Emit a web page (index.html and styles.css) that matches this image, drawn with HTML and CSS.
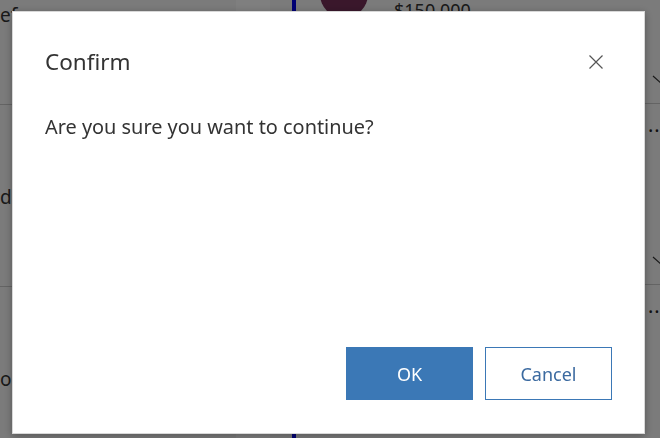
FILE: index.html
```html
<!DOCTYPE html>
<html lang="en">
<head>
  <meta charset="UTF-8" />
  <title>Opportunities</title>
  <link rel="stylesheet" href="styles.css">
</head>
<body>

<!-- page behind the dialog -->
<div class="page">
  <div class="list">
    <div class="list-row"><span class="row-text">ef</span></div>
    <div class="list-row"><span class="row-text">d</span></div>
    <div class="list-row"><span class="row-text">o</span></div>
  </div>
  <div class="strip"></div>
  <div class="gap"></div>
  <div class="main">
    <div class="card">
      <div class="avatar"></div>
      <div class="amount">$150,000</div>
    </div>
  </div>
  <div class="side">
    <div class="side-row">
      <span class="dots">&middot;&middot;&middot;</span>
      <svg class="chev" width="20" height="10" viewBox="0 0 20 10"><path d="M1 1 L10 9 L19 1" stroke="#333" stroke-width="1.2" fill="none"/></svg>
    </div>
    <div class="side-row">
      <span class="dots">&middot;&middot;&middot;</span>
      <svg class="chev" width="20" height="10" viewBox="0 0 20 10"><path d="M1 1 L10 9 L19 1" stroke="#333" stroke-width="1.2" fill="none"/></svg>
    </div>
    <div class="side-row">
      <span class="dots">&middot;&middot;&middot;</span>
    </div>
  </div>
</div>

<!-- Confirm dialog -->
<div class="overlay">
  <div class="dialog">
    <div class="dialog-head">
      <h2>Confirm</h2>
      <button class="close" aria-label="Close">
        <svg width="16" height="16" viewBox="0 0 16 16">
          <path d="M1.5 1.5 L14.5 14.5 M14.5 1.5 L1.5 14.5" stroke="#555" stroke-width="1.2" fill="none"/>
        </svg>
      </button>
    </div>
    <p class="dialog-body">Are you sure you want to continue?</p>
    <div class="dialog-foot">
      <button class="btn btn-primary">OK</button>
      <button class="btn btn-outline">Cancel</button>
    </div>
  </div>
</div>

</body>
</html>
```

FILE: styles.css
```css
body {
  margin: 0;
  font-family: "Segoe UI", "Noto Sans", sans-serif;
  color: #333;
  overflow: hidden;
}

.page {
  display: flex;
  height: 438px;
  overflow: hidden;
  background: #f6f6f6;
}

.list {
  width: 236px;
  margin-top: -77px;
}

.list-row {
  height: 181px;
  border-bottom: 1px solid #c8c8c8;
  display: flex;
  align-items: center;
}

.row-text {
  font-size: 19px;
  padding-top: 2px;
}

.strip {
  width: 34px;
  background: #ffffff;
}

.gap {
  width: 22px;
  border-right: 4px solid #0000e8;
}

.main {
  flex: 1;
  padding-left: 24px;
}

.card {
  display: flex;
  gap: 26px;
  margin-top: -30px;
}

.avatar {
  width: 48px;
  height: 48px;
  border-radius: 50%;
  background: #742f57;
}

.amount {
  padding-top: 28px;
  font-size: 18px;
}

.side {
  width: 16px;
  margin-top: -77px;
}

.side-row {
  height: 181px;
  border-bottom: 1px solid #c8c8c8;
  display: flex;
  flex-direction: column;
  justify-content: space-between;
  padding: 17px 0 18px 4px;
  box-sizing: border-box;
}

.dots {
  font-size: 20px;
  line-height: 20px;
  letter-spacing: 1px;
  color: #222;
}

.chev {
  margin-left: 4px;
  flex-shrink: 0;
}

/* dimmed backdrop and the dialog on top of it */
.overlay {
  position: fixed;
  inset: 0;
  background: rgba(0, 0, 0, 0.5);
  padding: 11px 0 0 12px;
}

.dialog {
  width: 633px;
  height: 423px;
  box-sizing: border-box;
  background: #fff;
  border: 1px solid #d8d8d8;
  box-shadow: 0 2px 8px rgba(0, 0, 0, 0.3);
  padding: 34px 32px 33px 32px;
  display: flex;
  flex-direction: column;
}

.dialog-head {
  display: flex;
  justify-content: space-between;
  align-items: center;
}

.dialog-head h2 {
  margin: 0;
  font-size: 22.5px;
  font-weight: normal;
  color: #333;
}

.close {
  border: none;
  background: none;
  padding: 0;
  margin-right: 8px;
  width: 16px;
  height: 16px;
  cursor: pointer;
}

.dialog-body {
  margin: 36px 0 0;
  font-size: 19.9px;
  color: #333;
  flex: 1;
}

.dialog-foot {
  display: flex;
  justify-content: flex-end;
  gap: 12px;
}

.btn {
  width: 127px;
  height: 53px;
  font-family: inherit;
  font-size: 18px;
  cursor: pointer;
}

.btn-primary {
  background: #3b78b6;
  border: 1px solid #3b78b6;
  color: #fff;
}

.btn-outline {
  background: #fff;
  border: 1px solid #3b78b6;
  color: #3b6aa0;
}
```
